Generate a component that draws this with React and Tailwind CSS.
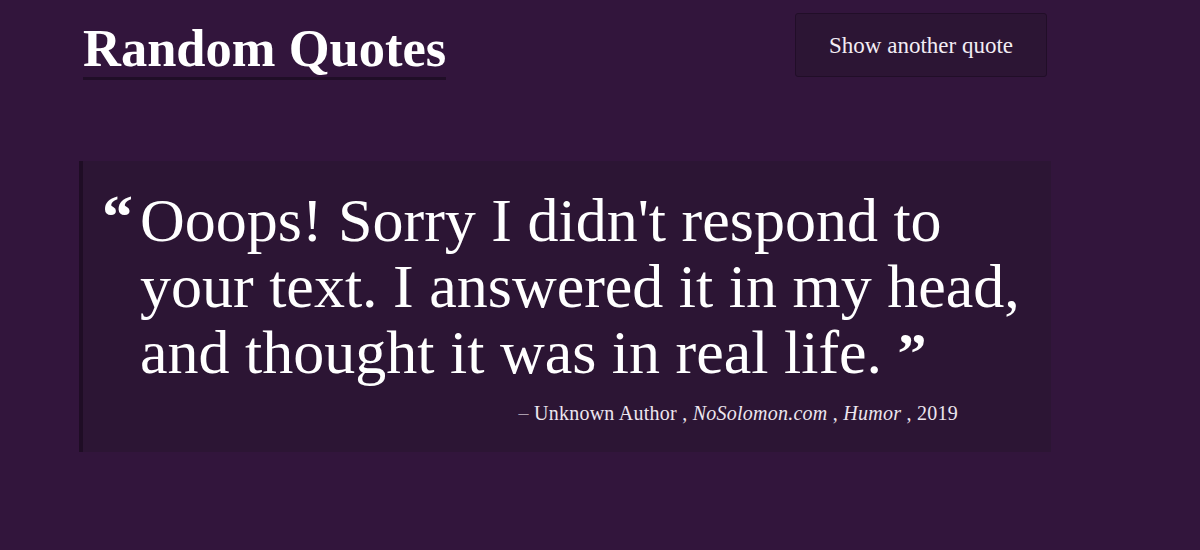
export default function App() {
  return (
    <div className="min-h-[550px] w-full bg-[#32153c] font-['Liberation_Serif',serif] text-white">
      <div className="ml-[79px] w-[972px]">
        <header className="flex h-[77px] items-start justify-between px-1 pt-[13px]">
          <h1 className="mt-[9px] border-b-[3px] border-[#200e27] pb-[2px] text-[52.5px] font-bold leading-none text-white">
            Random Quotes
          </h1>
          <button className="h-[64px] w-[252px] rounded-[3px] border border-[#210e28] bg-[#2c1534] pt-[3px] text-[23px] text-[#f3edf4]">
            Show another quote
          </button>
        </header>
        <blockquote className="mt-[84px] h-[291px] border-l-4 border-[#1f0d25] bg-[#2c1534] pl-[19px] pt-[26px]">
          <div className="flex items-start">
            <span className="w-[38px] shrink-0 text-[62px] font-bold leading-[58px]">“</span>
            <p className="w-[895px] text-[62px] leading-[66px] text-white">
              Ooops! Sorry I didn't respond to your text. I answered it in my head, and thought it was in real life.{" "}
              <span className="text-[58px] font-bold leading-[40px]">”</span>
            </p>
          </div>
          <footer className="mt-[14px] pr-[93px] text-right text-[20px] leading-[28px] tracking-[0.25px] text-[#ede6ef]">
            <span className="text-[#a99bab]">–</span> Unknown Author , <i>NoSolomon.com</i> , <i>Humor</i> , 2019
          </footer>
        </blockquote>
      </div>
    </div>
  );
}
